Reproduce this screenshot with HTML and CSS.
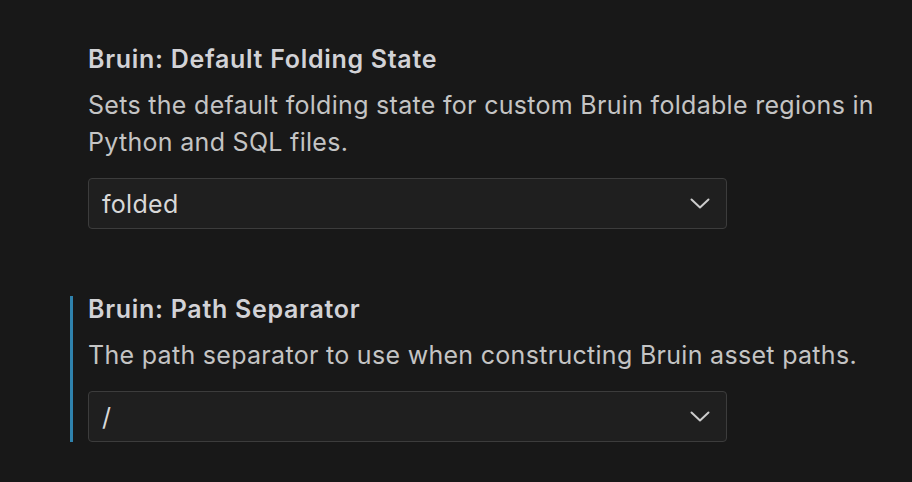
FILE: index.html
```html
<!DOCTYPE html>
<html>
<head>
<meta charset="utf-8">
<link rel="stylesheet" href="styles.css">
</head>
<body>
<div class="settings">
  <div class="item">
    <div class="title"><span class="cat">Bruin: </span>Default Folding State</div>
    <div class="desc">Sets the default folding state for custom Bruin foldable regions in Python and SQL files.</div>
    <div class="select">
      <span class="value">folded</span>
      <svg class="chev" width="20" height="11" viewBox="0 0 20 11"><path d="M1.5 1.5 L10 9.5 L18.5 1.5" fill="none" stroke="#cccccc" stroke-width="2" stroke-linecap="round" stroke-linejoin="round"/></svg>
    </div>
  </div>
  <div class="item focused">
    <div class="title"><span class="cat">Bruin: </span>Path Separator</div>
    <div class="desc">The path separator to use when constructing Bruin asset paths.</div>
    <div class="select">
      <span class="value">/</span>
      <svg class="chev" width="20" height="11" viewBox="0 0 20 11"><path d="M1.5 1.5 L10 9.5 L18.5 1.5" fill="none" stroke="#cccccc" stroke-width="2" stroke-linecap="round" stroke-linejoin="round"/></svg>
    </div>
  </div>
</div>
</body>
</html>
```
FILE: styles.css
```css
html, body {
  margin: 0;
  padding: 0;
  background: #181818;
  height: 100%;
  overflow: hidden;
}
body {
  font-family: Inter, "Noto Sans", sans-serif;
  color: #cccccc;
}
.settings {
  padding-left: 70px;
  padding-top: 46px;
  display: flex;
  flex-direction: column;
  gap: 67px;
}
.item {
  border-left: 3px solid transparent;
  padding-left: 15px;
  width: 810px;
}
.item.focused {
  border-left-color: #2f82ad;
}
.title {
  font-size: 25px;
  font-weight: 600;
  line-height: 26px;
  letter-spacing: 0.7px;
  color: #d2d2d6;
}
.desc {
  font-size: 25px;
  line-height: 37px;
  letter-spacing: 0.3px;
  color: #c4c4c4;
  margin-top: 15px;
  width: 800px;
}
.select {
  margin-top: 17px;
  width: 639px;
  height: 51px;
  box-sizing: border-box;
  background: #1f1f1f;
  border: 1px solid #3c3c3c;
  border-radius: 4px;
  display: flex;
  align-items: center;
  justify-content: space-between;
  padding: 0 16px 0 13px;
}
.value {
  font-size: 25px;
  letter-spacing: 0.3px;
  color: #d8d8d8;
}
.chev {
  display: block;
}
```
